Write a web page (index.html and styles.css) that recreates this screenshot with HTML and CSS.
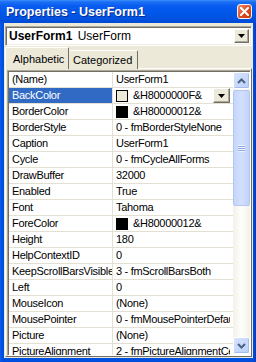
FILE: index.html
```html
<!DOCTYPE html>
<html lang="en">
<head>
  <meta charset="UTF-8" />
  <title>Properties - UserForm1</title>
  <link rel="stylesheet" href="styles.css">
</head>
<body>
<div class="window">
  <div class="titlebar">
    <span class="title">Properties - UserForm1</span>
    <span class="close">
      <svg width="9" height="9" viewBox="0 0 9 9"><path d="M1 1 L8 8 M8 1 L1 8" stroke="#fff" stroke-width="2" stroke-linecap="square"/></svg>
    </span>
  </div>
  <div class="frame">
    <div class="combo">
      <span class="combo-text"><b>UserForm1</b> UserForm</span>
      <span class="btn drop"><svg width="7" height="4" viewBox="0 0 7 4"><path d="M0 0 H7 L3.5 4 Z" fill="#000"/></svg></span>
    </div>
    <div class="tabs">
      <div class="tab active">Alphabetic</div>
      <div class="tab">Categorized</div>
    </div>
    <div class="panel">
      <div class="grid">
        <div class="rows">
          <div class="row"><div class="name">(Name)</div><div class="value">UserForm1</div></div>
          <div class="row selected"><div class="name">BackColor</div><div class="value"><span class="swatch face"></span>&amp;H8000000F&amp;<span class="btn cell-drop"><svg width="7" height="4" viewBox="0 0 7 4"><path d="M0 0 H7 L3.5 4 Z" fill="#000"/></svg></span></div></div>
          <div class="row"><div class="name">BorderColor</div><div class="value"><span class="swatch black"></span>&amp;H80000012&amp;</div></div>
          <div class="row"><div class="name">BorderStyle</div><div class="value">0 - fmBorderStyleNone</div></div>
          <div class="row"><div class="name">Caption</div><div class="value">UserForm1</div></div>
          <div class="row"><div class="name">Cycle</div><div class="value">0 - fmCycleAllForms</div></div>
          <div class="row"><div class="name">DrawBuffer</div><div class="value">32000</div></div>
          <div class="row"><div class="name">Enabled</div><div class="value">True</div></div>
          <div class="row"><div class="name">Font</div><div class="value">Tahoma</div></div>
          <div class="row"><div class="name">ForeColor</div><div class="value"><span class="swatch black"></span>&amp;H80000012&amp;</div></div>
          <div class="row"><div class="name">Height</div><div class="value">180</div></div>
          <div class="row"><div class="name">HelpContextID</div><div class="value">0</div></div>
          <div class="row"><div class="name">KeepScrollBarsVisible</div><div class="value">3 - fmScrollBarsBoth</div></div>
          <div class="row"><div class="name">Left</div><div class="value">0</div></div>
          <div class="row"><div class="name">MouseIcon</div><div class="value">(None)</div></div>
          <div class="row"><div class="name">MousePointer</div><div class="value">0 - fmMousePointerDefault</div></div>
          <div class="row"><div class="name">Picture</div><div class="value">(None)</div></div>
          <div class="row"><div class="name">PictureAlignment</div><div class="value">2 - fmPictureAlignmentCenter</div></div>
        </div>
        <div class="scrollbar">
          <div class="sb-btn"><svg width="9" height="6" viewBox="0 0 9 6"><path d="M1 5 L4.5 1.5 L8 5" fill="none" stroke="#4d6185" stroke-width="2"/></svg></div>
          <div class="track">
            <div class="thumb"><span class="grip"></span></div>
          </div>
          <div class="sb-btn"><svg width="9" height="6" viewBox="0 0 9 6"><path d="M1 1 L4.5 4.5 L8 1" fill="none" stroke="#4d6185" stroke-width="2"/></svg></div>
        </div>
      </div>
    </div>
  </div>
</div>
</body>
</html>
```

FILE: styles.css
```css
* { box-sizing: border-box; margin: 0; padding: 0; }
html, body { width: 256px; height: 362px; overflow: hidden; background: #0055e5; }
body { font-family: 'Liberation Sans', Arial, sans-serif; font-size: 11px; letter-spacing: -0.3px; color: #000; }

.window { display: flex; flex-direction: column; height: 362px; background: linear-gradient(to right, #0a5ef0, #0050e0 2px, #0050e0 253px, #003ccc); }
.titlebar { height: 23px; flex: none; display: flex; align-items: center; padding: 0 4px 0 6px; color: #fff; font-weight: bold; font-size: 12.5px; letter-spacing: 0;
  background: linear-gradient(to bottom, #3d8ffa 0, #1a6ff5 2px, #0a5cf0 6px, #0057ea 12px, #0053e2 18px, #004ad6 23px); }
.title { flex: 1; text-shadow: 1px 1px #0b2a8e; }
.close { width: 15px; height: 15px; border: 1px solid #f4f4f4; border-radius: 3px; display: flex; align-items: center; justify-content: center;
  background: linear-gradient(135deg, #f08b6a, #d9481e 60%, #c23a12); }

.frame { flex: 1; min-height: 0; margin: 0 3px 4px 4px; background: #ece9d8; display: flex; flex-direction: column; padding: 3px 1px 1px 1px; }

.combo { height: 20px; flex: none; display: flex; align-items: center; justify-content: space-between; background: #fff;
  border: 1px solid; border-color: #aca899 #fff #fff #aca899; box-shadow: inset 1px 1px #716f64, inset -1px -1px #f1efe2; padding: 0 2px 0 2px; }
.combo-text { padding-left: 1px; white-space: nowrap; font-size: 12px; letter-spacing: 0; }
.combo-text b { margin-right: 2px; }
.btn { display: flex; align-items: center; justify-content: center; background: #ece9d8;
  border: 1px solid; border-color: #fff #716f64 #716f64 #fff; box-shadow: inset -1px -1px #aca899; }
.drop { width: 15px; height: 14px; }

.tabs { height: 22px; flex: none; margin-top: 1px; display: flex; align-items: flex-end; margin-bottom: -1px; position: relative; z-index: 1; letter-spacing: 0; }
.tab { height: 19px; padding: 3px 5px 0 4px; border: 1px solid; border-bottom: none; border-color: #fff #716f64 #fff #fff; border-radius: 2px 2px 0 0; background: #ece9d8; }
.tab.active { height: 22px; width: 64px; padding: 5px 0 0 7px; }
.tab:not(.active) { width: 69px; border-left: none; }

.panel { flex: 1; min-height: 0; border: 1px solid; border-color: #fff #716f64 #716f64 #fff; padding: 1px 0 0 1px; display: flex; }

.grid { flex: 1; min-height: 0; display: flex; background: #fff; border: 1px solid; border-color: #aca899 #fff #fff #aca899; box-shadow: inset 1px 1px #716f64; padding: 1px 0 0 1px; }
.rows { flex: 1; overflow: hidden; }
.row { display: grid; grid-template-columns: 104px 117px; height: 16px; border-bottom: 1px solid #e3e0d2; white-space: nowrap; }
.name, .value { line-height: 15px; overflow: hidden; padding-left: 3px; }
.name { border-right: 1px solid #e3e0d2; }
.value { display: flex; align-items: center; position: relative; }
.selected .name { background: #316ac5; color: #fff; }
.swatch { width: 12px; height: 12px; border: 1px solid #000; margin-right: 5px; flex: none; }
.swatch.face { background: #ece9d8; }
.swatch.black { background: #000; }
.cell-drop { position: absolute; right: 0; top: 0; width: 17px; height: 15px; }

.scrollbar { width: 17px; flex: none; display: flex; flex-direction: column; background: linear-gradient(to right, #f3f1e9, #fefefb 50%, #f3f1e9); margin-bottom: 1px; }
.sb-btn { height: 17px; flex: none; display: flex; align-items: center; justify-content: center; border: 1px solid #fff; border-radius: 2px;
  background: linear-gradient(135deg, #d6e3fd, #bcd0f9); box-shadow: inset -1px -1px #a6bcef; }
.track { flex: 1; padding-top: 1px; }
.thumb { height: 116px; border: 1px solid #b3c7f3; border-radius: 2px; background: linear-gradient(to right, #c6d6fb, #d3e0fd 50%, #c2d3fa); display: flex; align-items: center; justify-content: center; }
.grip { width: 7px; height: 7px; background: repeating-linear-gradient(to bottom, #eef3fe 0, #eef3fe 1px, #8fa9e8 1px, #8fa9e8 2px); }
```
